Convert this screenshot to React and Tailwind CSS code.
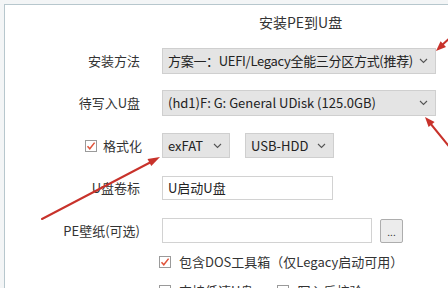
import React from 'react';

const Chevron = ({ className = '' }) => (
  <svg className={className} width="9" height="6" viewBox="0 0 9 6" fill="none">
    <path d="M1 1l3.5 3.5L8 1" stroke="#555" strokeWidth="1.1" />
  </svg>
);

const Check = ({ checked = true }) => (
  <span className="w-[12px] h-[12px] border border-[#9a9a9a] bg-white flex items-center justify-center shrink-0">
    {checked && (
      <svg width="10" height="10" viewBox="0 0 10 10" fill="none">
        <path d="M1.5 5.2l2.3 2.6L8.6 1.6" stroke="#e0533a" strokeWidth="1.5" />
      </svg>
    )}
  </span>
);

const Select = ({ value, width, textClass = '' }) => (
  <div
    className="h-full flex items-center justify-between pl-[5px] pr-[7px] bg-[#e4e4e4] border border-[#cfcfcf] text-[#222]"
    style={{ width }}
  >
    <span className={`whitespace-nowrap ${textClass}`}>{value}</span>
    <Chevron />
  </div>
);

const Label = ({ children }) => (
  <div className="w-[135px] text-right text-[#333] whitespace-nowrap">{children}</div>
);

export default function App() {
  return (
    <div className="w-[448px] h-[288px] overflow-hidden bg-[#f3f5f6] relative text-[13px] leading-[18px] font-['Noto_Sans_CJK_SC','Noto_Sans',sans-serif]">
      <div className="ml-[4px] mt-[4px] h-[284px] border-t border-l border-[#b7c7cd] bg-white">
        {/* title */}
        <div className="h-[43px] pt-[8px] pl-[254px] text-[14px] text-[#333]">安装PE到U盘</div>

        {/* 安装方法 */}
        <div className="h-[26px] flex items-center">
          <Label>安装方法</Label>
          <div className="ml-[22px] h-full">
            <Select width={274} textClass="tracking-[-0.3px]" value="方案一：UEFI/Legacy全能三分区方式(推荐)" />
          </div>
        </div>

        {/* 待写入U盘 */}
        <div className="mt-[16px] h-[26px] flex items-center">
          <Label>待写入U盘</Label>
          <div className="ml-[22px] h-full">
            <Select width={274} value="(hd1)F: G: General UDisk (125.0GB)" />
          </div>
        </div>

        {/* 格式化 */}
        <div className="mt-[17px] h-[25px] flex items-center">
          <div className="w-[137px] flex items-center justify-end gap-[6px] text-[#333]">
            <Check />
            <span>格式化</span>
          </div>
          <div className="ml-[20px] h-full flex gap-[15px]">
            <Select width={68} value="exFAT" />
            <Select width={89} value="USB-HDD" />
          </div>
        </div>

        {/* U盘卷标 */}
        <div className="mt-[18px] h-[24px] flex items-center">
          <Label>U盘卷标</Label>
          <div className="ml-[22px] h-full w-[171px] border border-[#d2d2d2] bg-white flex items-center pl-[5px] text-[#222]">
            U启动U盘
          </div>
        </div>

        {/* PE壁纸 */}
        <div className="mt-[18px] h-[25px] flex items-center">
          <Label>PE壁纸(可选)</Label>
          <div className="ml-[22px] h-full w-[210px] border border-[#d2d2d2] bg-white" />
          <div className="ml-[8px] h-[24px] w-[23px] border border-[#adadad] rounded-[2px] bg-[#ececec] flex items-end justify-center pb-[5px] text-[10px] leading-[10px] text-[#333]">
            ...
          </div>
        </div>

        {/* DOS工具箱 */}
        <div className="mt-[9px] h-[20px] flex items-center pl-[154px] gap-[8px] text-[#333]">
          <Check />
          <span className="whitespace-nowrap">包含DOS工具箱（仅Legacy启动可用）</span>
        </div>

        {/* next row, cut off by the window edge as in the screenshot */}
        <div className="mt-[9px] h-[20px] flex items-center pl-[154px] text-[#333]">
          <Check checked={false} />
          <span className="ml-[8px] whitespace-nowrap">支持低速U盘</span>
          <div className="ml-[24px] flex items-center gap-[8px]">
            <Check checked={false} />
            <span className="whitespace-nowrap">写入后校验</span>
          </div>
        </div>
      </div>

      {/* red annotation arrows */}
      <svg className="absolute inset-0 pointer-events-none" width="448" height="288" viewBox="0 0 448 288">
        <g stroke="#c8322b" strokeWidth="2" fill="#c8322b" strokeLinecap="round">
          <line x1="42" y1="219" x2="151" y2="162" />
          <polygon points="160,157 151.3,166.1 147.5,159.1" stroke="none" />
          <line x1="452" y1="36" x2="441" y2="46" />
          <polygon points="436,51 446,47.1 440.6,41.3" stroke="none" />
          <line x1="452" y1="150" x2="430" y2="123" />
          <polygon points="425,117 434.6,121.9 428.6,127.1" stroke="none" />
        </g>
      </svg>
    </div>
  );
}
